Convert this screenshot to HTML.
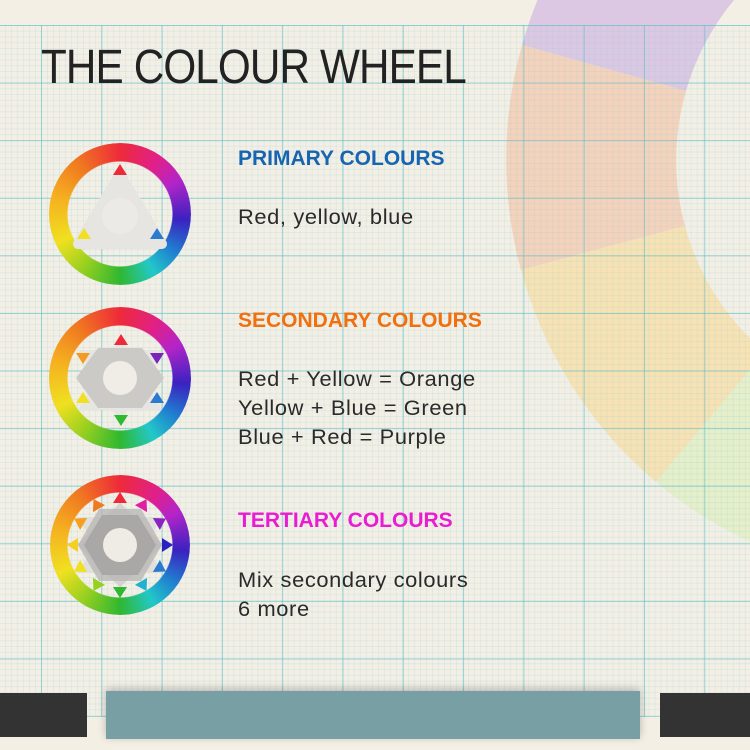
<!DOCTYPE html>
<html><head><meta charset="utf-8"><style>
*{margin:0;padding:0;box-sizing:border-box}
body{width:750px;height:750px;overflow:hidden;background:#f4efe5;position:relative;font-family:"Liberation Sans",sans-serif}
.grid{position:absolute;left:0;top:25px;width:750px;height:692px;
background-image:
linear-gradient(to right,rgba(90,190,200,.6) 1px,transparent 1px),
linear-gradient(to bottom,rgba(90,190,200,.6) 1px,transparent 1px),
linear-gradient(to right,rgba(130,205,215,.18) 1px,transparent 1px),
linear-gradient(to bottom,rgba(130,205,215,.18) 1px,transparent 1px);
background-size:60.3px 57.6px,60.3px 57.6px,6.03px 5.76px,6.03px 5.76px;
background-position:41px 0,0 0,41px 0,0 0}
.t{position:absolute;white-space:nowrap}
h1{position:absolute;left:41px;top:40px;font-weight:normal;font-size:48px;color:#222;transform-origin:0 0;transform:scaleX(.88);letter-spacing:-1px;white-space:nowrap}
.h{font-weight:bold;font-size:21px;left:238px}
.b{font-size:21px;color:#2a2a2a;left:238px;line-height:29px;letter-spacing:.6px;transform-origin:0 0;transform:scaleX(1.04)}
.ring{position:absolute;border-radius:50%;
background:conic-gradient(#ee2a3a 0deg,#e0208a 35deg,#b424c8 60deg,#3a22c0 95deg,#2080d0 125deg,#22c8c8 150deg,#30b830 180deg,#9ad020 215deg,#f0e020 245deg,#f5b020 285deg,#f07a20 320deg,#ee2a3a 360deg);
-webkit-mask:radial-gradient(circle,transparent 52px,#000 53px);mask:radial-gradient(circle,transparent 52px,#000 53px);
box-shadow:0 0 0 1px rgba(0,0,0,.25)}
</style></head><body>
<svg style="position:absolute;left:0;top:0" width="750" height="750">
<g transform="translate(926,160)">
<path d="M-404 -115 A420 420 0 0 1 -130 -400 L-77 -238 A250 250 0 0 0 -240 -69Z" fill="#dcc8e2"/>
<path d="M-404 -115 A420 420 0 0 0 -405 110 L-241 66 A250 250 0 0 1 -240 -69Z" fill="#f5d2bb"/>
<path d="M-405 110 A420 420 0 0 0 -270 322 L-161 192 A250 250 0 0 1 -241 66Z" fill="#f8e2b4"/>
<path d="M-270 322 A420 420 0 0 0 20 420 L12 250 A250 250 0 0 1 -161 192Z" fill="#e6efca"/>
</g></svg>
<div class="grid"></div>
<h1>THE COLOUR WHEEL</h1>

<div class="ring" style="left:49px;top:143px;width:142px;height:142px"></div>
<svg style="position:absolute;left:50px;top:144px" width="140" height="140">
<path d="M70 30 L28 100 L112 100Z" fill="#e6e5e2" stroke="#e6e5e2" stroke-width="10" stroke-linejoin="round"/>
<circle cx="70" cy="72" r="18" fill="#ebeae6"/>
<path d="M70 20 L77 31 L63 31Z" fill="#ee2a3a"/>
<path d="M34 84 L41 95 L27 95Z" fill="#f0e020"/>
<path d="M107 84 L114 95 L100 95Z" fill="#2a7ad0"/>
</svg>

<div class="ring" style="left:49px;top:307px;width:142px;height:142px"></div>
<svg style="position:absolute;left:50px;top:308px" width="140" height="140">
<path d="M70 30 L112 102 L28 102Z M70 114 L28 42 L112 42Z" fill="#e6e5e2"/>
<path d="M48 40 L92 40 L114 70 L92 100 L48 100 L26 70Z" fill="#cbcac7"/>
<circle cx="70" cy="70" r="17" fill="#f0ede6"/>
<path d="M71 26 L78 37 L64 37Z" fill="#ee2a3a"/>
<path d="M26 45 L40 45 L33 56Z" fill="#f59a20"/>
<path d="M100 45 L114 45 L107 56Z" fill="#7a24b8"/>
<path d="M33 84 L40 95 L26 95Z" fill="#f0e020"/>
<path d="M107 84 L114 95 L100 95Z" fill="#2a7ad0"/>
<path d="M64 107 L78 107 L71 118Z" fill="#30b830"/>
</svg>

<div class="ring" style="left:50px;top:475px;width:140px;height:140px"></div>
<svg style="position:absolute;left:50px;top:475px" width="140" height="140">
<path d="M70 26 L112 98 L28 98Z M70 114 L28 42 L112 42Z" fill="#e0dfdc"/>
<path d="M40 40 L100 40 L100 100 L40 100Z" fill="#d4d3d0" transform="rotate(45 70 70)"/>
<path d="M49 34 L91 34 L112 70 L91 106 L49 106 L28 70Z" fill="#b9b8b5" opacity=".8"/>
<path d="M52 40 L88 40 L106 70 L88 100 L52 100 L34 70Z" fill="#a9a8a6"/>
<circle cx="70" cy="70" r="17" fill="#efece5"/>
<path d="M70 17 L77 28 L63 28Z" fill="#ee2a3a"/>
<path d="M70 17 L77 28 L63 28Z" fill="#e020a0" transform="rotate(30 70 70)"/>
<path d="M70 17 L77 28 L63 28Z" fill="#8a24c0" transform="rotate(60 70 70)"/>
<path d="M70 17 L77 28 L63 28Z" fill="#2a22c0" transform="rotate(90 70 70)"/>
<path d="M70 17 L77 28 L63 28Z" fill="#2a7ad0" transform="rotate(120 70 70)"/>
<path d="M70 17 L77 28 L63 28Z" fill="#22b0d0" transform="rotate(150 70 70)"/>
<path d="M70 17 L77 28 L63 28Z" fill="#30b830" transform="rotate(180 70 70)"/>
<path d="M70 17 L77 28 L63 28Z" fill="#98d020" transform="rotate(210 70 70)"/>
<path d="M70 17 L77 28 L63 28Z" fill="#f0e020" transform="rotate(240 70 70)"/>
<path d="M70 17 L77 28 L63 28Z" fill="#f5d020" transform="rotate(270 70 70)"/>
<path d="M70 17 L77 28 L63 28Z" fill="#f5a020" transform="rotate(300 70 70)"/>
<path d="M70 17 L77 28 L63 28Z" fill="#f07a20" transform="rotate(330 70 70)"/>
</svg>

<div class="t h" style="top:147px;color:#1565b0">PRIMARY COLOURS</div>
<div class="t b" style="top:203px">Red, yellow, blue</div>
<div class="t h" style="top:309px;color:#f07010">SECONDARY COLOURS</div>
<div class="t b" style="top:365px">Red + Yellow = Orange<br>Yellow + Blue = Green<br>Blue + Red = Purple</div>
<div class="t h" style="top:509px;color:#e81cd0">TERTIARY COLOURS</div>
<div class="t b" style="top:566px">Mix secondary colours<br>6 more</div>

<div style="position:absolute;left:0;top:693px;width:87px;height:44px;background:#333"></div>
<div style="position:absolute;left:106px;top:691px;width:534px;height:48px;background:#789fa3;box-shadow:0 -2px 8px rgba(0,0,0,.25)"></div>
<div style="position:absolute;left:660px;top:693px;width:90px;height:44px;background:#333"></div>
</body></html>
